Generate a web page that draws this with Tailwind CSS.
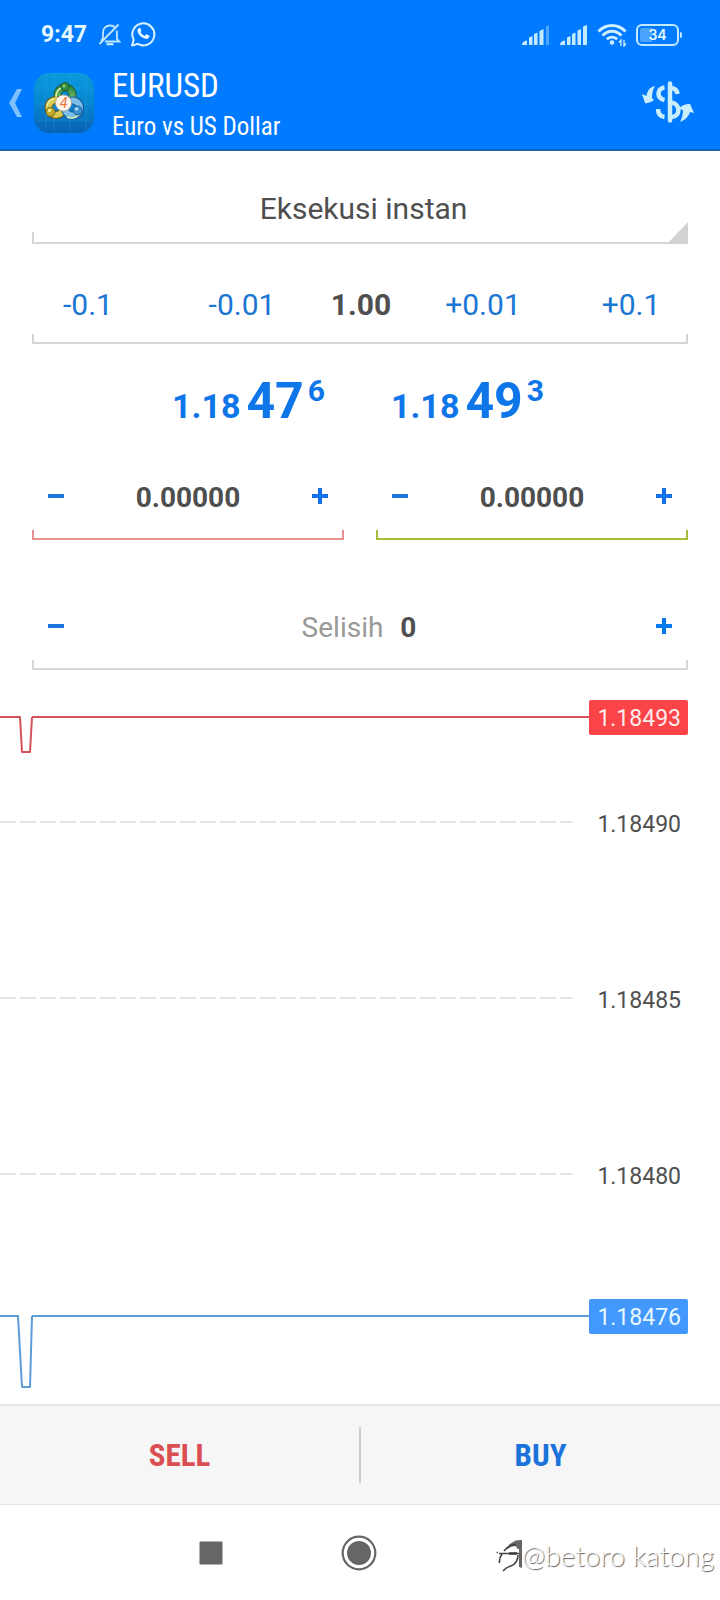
<!DOCTYPE html>
<html lang="id">
<head>
<meta charset="utf-8">
<meta name="viewport" content="width=device-width, initial-scale=1">
<title>EURUSD</title>
<script src="https://cdn.jsdelivr.net/npm/@tailwindcss/browser@4"></script>
</head>
<body class="relative min-h-screen bg-white font-[Roboto,sans-serif] text-[#4f4f4f]">
<header class="border-b-2 border-[#1b63b4] bg-[#007aff] text-[#e6f8ff]">
  <div class="flex h-[66px] items-center pt-1 pr-[38px] pl-[41px]">
    <span class="text-[23px] font-bold">9:47</span>
    <svg class="ml-[11px] h-6 w-6" viewBox="0 0 24 24" fill="none" stroke="#bfe6ff" stroke-width="1.8" aria-hidden="true">
      <path d="M5 15.500V9.500C5 5 8 2.500 12 2.500c2 0 3.800.7 5 2M18.500 7.500c.3 1 .4 2 .4 3v5.300l2.500 2.700H7M5 15.500l-2 2.300M1.500 21 20.500 1.500"/><path d="M8.500 21.200h7" stroke-width="2.200"/>
    </svg>
    <svg class="mb-[3px] ml-2 h-[26px] w-[26px]" viewBox="0 0 26 26" aria-hidden="true">
      <path d="M2 24.500 3.700 18.700A11 11 0 1 1 7.800 22.900Z" fill="none" stroke="#d9f4ff" stroke-width="2" stroke-linejoin="round"/>
      <path d="M8.800 7.200c.5-.5 1.300-.6 1.600.1l.9 2.100c.2.500-.2 1-.8 1.700.9 1.800 2.300 3.100 4.200 3.900l1.300-1.500c.3-.3.6-.3 1-.1l2 1c.7.400.5 1 .3 1.600-.6 1.500-2.300 2.100-3.700 1.800-4-.8-7-3.700-8-7-.4-1.500.2-2.800 1.200-3.600Z" fill="#e6f8ff"/>
    </svg>
    <div class="ml-auto flex items-center">
      <svg class="h-5 w-7" viewBox="0 0 28 20" fill="#c4eaff" aria-hidden="true"><path d="M1 20q0-4 5-4.500V20ZM8 12.500l3.500-1.500v9H8ZM13 9l3.500-1.500V20H13ZM18.500 6 22.500 4v16h-4Z"/><path d="M25 1.500 28 0v20h-3Z" opacity=".4"/></svg>
      <svg class="ml-2.5 h-5 w-7" viewBox="0 0 28 20" fill="#c4eaff" aria-hidden="true"><path d="M1 20q0-4 5-4.500V20ZM8 12.500l3.500-1.500v9H8ZM13 9l3.500-1.500V20H13ZM18.500 5.500 22 4v16h-3.500ZM24 1.500 28 0v20H24Z"/></svg>
      <svg class="ml-2.5 h-6 w-[30px]" viewBox="0 0 30 24" fill="none" stroke="#cfefff" stroke-width="2.800" aria-hidden="true">
        <path d="M1.500 8.500c7.500-8 19.500-8 27 0M5.500 12.500c5.500-5.700 13.500-5.700 19 0M9.800 16.300c3-3 7.400-3 10.400 0"/><circle cx="15" cy="19.500" r="1.300" stroke-width="2"/>
        <path d="M24 23v-6l-2 2.500M27 17v6l2-2.500" stroke-width="1.300"/>
      </svg>
      <div class="ml-[9px] flex items-center gap-px">
        <div class="flex h-[22px] w-[43px] items-center justify-center rounded-md border-2 border-[#c4eaff] bg-linear-to-r from-[#4aa3ff] from-35% to-transparent to-35% bg-clip-content p-[2px] font-[Inter,sans-serif] text-[14px] leading-none font-semibold">34</div>
        <div class="h-1.5 w-[2px] rounded-r bg-[#c4eaff]"></div>
      </div>
    </div>
  </div>
  <div class="flex h-[83px] items-start pr-[25px] pl-2">
    <button type="button" aria-label="Kembali" class="mt-[22px]"><svg class="h-[30px] w-4" viewBox="0 0 16 30"><path d="M14 1H9L1 15l8 14h5L7 15Z" fill="#7fc0ff"/></svg></button>
    <svg class="mt-[7px] ml-2.5 h-[60px] w-[60px]" viewBox="0 0 60 60" aria-hidden="true">
      <defs>
        <linearGradient id="tile" x1="0" y1="0" x2="0" y2="1"><stop offset="0" stop-color="#0a9add"/><stop offset=".5" stop-color="#0787d0"/><stop offset="1" stop-color="#0861b5"/></linearGradient>
        <linearGradient id="green" x1="0" y1="0" x2="0" y2="1"><stop offset="0" stop-color="#2f8c45"/><stop offset="1" stop-color="#8cc968"/></linearGradient>
      </defs>
      <rect width="60" height="60" rx="15" fill="url(#tile)"/>
      <path d="M12 2v56M20 0v60M36 0v60M52 3v54M2 15h56M0 31h60M2 47h56" stroke="#5dc2ee" stroke-width=".7" opacity=".25"/>
      <g fill="none" stroke-width="6">
        <circle cx="31" cy="22" r="7.500" stroke="#1f5d3b" stroke-width="8"/><circle cx="31" cy="22" r="7.500" stroke="url(#green)"/>
        <circle cx="22" cy="34.500" r="7.500" stroke="#695c20" stroke-width="8"/><circle cx="22" cy="34.500" r="7.500" stroke="#d9c94e"/>
        <circle cx="38.500" cy="35" r="7.500" stroke="#175b94" stroke-width="8"/><circle cx="38.500" cy="35" r="7.500" stroke="#7dbdea"/>
      </g>
      <path d="M22 24a10 10 0 0 1 5-9M13 33a9 9 0 0 1 7-7M33 44a9 9 0 0 0 11-2" fill="none" stroke="#dff1b0" stroke-width="1.500"/>
      <circle cx="31" cy="13.500" r="4" fill="#348c3c" stroke="#1c5c36"/><circle cx="16.500" cy="39" r="4.500" fill="#c0aa2d" stroke="#6e641d"/><circle cx="43.500" cy="37.500" r="4.500" fill="#3a90cf" stroke="#1b5f98"/>
      <circle cx="30" cy="13" r="1.500" fill="#8fd37c"/><circle cx="15.500" cy="37.500" r="1.800" fill="#f3e98c"/><circle cx="42.500" cy="36" r="1.800" fill="#a9dcfa"/>
      <circle cx="29.500" cy="30" r="8" fill="#fff7ee" stroke="#a9a08b" stroke-width=".8"/>
      <text x="29.500" y="35" text-anchor="middle" font-family="Roboto, sans-serif" font-size="14" font-style="italic" fill="#e5763c">4</text>
    </svg>
    <div class="ml-[18px] font-['Roboto_Condensed','Liberation_Sans_Narrow',sans-serif] text-white">
      <h1 class="text-[33px] leading-10">EURUSD</h1>
      <p class="mt-[5px] text-[25px] leading-8">Euro vs US Dollar</p>
    </div>
    <button type="button" aria-label="Ganti simbol" class="mt-[15px] ml-auto"><svg class="h-[42px] w-[54px]" viewBox="0 0 54 42">
      <g fill="none" stroke="#cbeeff" stroke-width="4.500"><path d="M29 2.500v37" stroke-linecap="round"/><path d="M23.500 6.500c-8 1-8 10.500 0 12.500M17 28c0 5 3 7.500 6.500 8M31 7c3 .5 5 2.500 5.500 6M31 21.500c9 2 8 14 0 14.500"/></g>
      <path d="M14 5C9 6 6 10 5.500 15L1 13l3 9q4 1 9-3l-2-2q0-7 3-12ZM39 41c2-4 3-8 3-12l-4-1q3-5 11-5l4 9-4-1q-2 7-10 10Z" fill="#cbeeff"/>
    </svg></button>
  </div>
</header>

<main>
  <div class="relative mx-8 mt-[33px]">
    <select aria-label="Jenis eksekusi" class="block h-12 w-full appearance-none bg-transparent pl-[7px] text-center text-[30px] [text-align-last:center]"><option>Eksekusi instan</option></select>
    <div class="h-3 border-b-2 border-l-2 border-[#d6d6d6]"></div>
    <div class="absolute right-0 bottom-0 h-[22px] w-[21px] bg-[#d3d3d3] [clip-path:polygon(100%_0,100%_100%,0_100%)]"></div>
  </div>

  <div class="mt-[30px] grid h-[60px] grid-cols-[176fr_132fr_106fr_138fr_158fr] items-center pr-2.5 text-center text-[30px] text-[#1a76d2]">
    <button type="button">-0.1</button>
    <button type="button">-0.01</button>
    <input aria-label="Volume" value="1.00" class="w-full min-w-0 text-center font-bold text-[#4f4f4f]">
    <button type="button">+0.01</button>
    <button type="button">+0.1</button>
  </div>
  <div class="mx-8 h-2.5 border-x-2 border-b-2 border-[#d6d6d6]"></div>

  <div class="mt-8 flex h-[50px] justify-center gap-[66px] pr-1 font-bold text-[#0f76ea]">
    <p class="flex items-baseline"><span class="text-[34px] leading-none">1.18</span><span class="ml-1.5 text-[50px] leading-none">47</span><sup class="top-0 ml-1 self-start text-[30px] leading-none">6</sup></p>
    <p class="flex items-baseline"><span class="text-[34px] leading-none">1.18</span><span class="ml-1.5 text-[50px] leading-none">49</span><sup class="top-0 ml-1 self-start text-[30px] leading-none">3</sup></p>
  </div>

  <div class="mx-8 mt-9 grid grid-cols-2 gap-8">
    <div>
      <div class="flex h-[68px] items-center px-4">
        <button type="button" aria-label="Kurangi Stop Loss"><svg class="h-4 w-4" viewBox="0 0 16 16"><path d="M0 6h16v4H0Z" fill="#1a74dc"/></svg></button>
        <input aria-label="Stop Loss" value="0.00000" class="w-full min-w-0 flex-1 pt-1 text-center text-[28px] font-bold">
        <button type="button" aria-label="Tambah Stop Loss"><svg class="h-4 w-4" viewBox="0 0 16 16"><path d="M0 6h6V0h4v6h6v4h-6v6H6v-6H0Z" fill="#1074e8"/></svg></button>
      </div>
      <div class="h-2.5 border-x-2 border-b-2 border-[#e88f92]"></div>
    </div>
    <div>
      <div class="flex h-[68px] items-center px-4">
        <button type="button" aria-label="Kurangi Take Profit"><svg class="h-4 w-4" viewBox="0 0 16 16"><path d="M0 6h16v4H0Z" fill="#1a74dc"/></svg></button>
        <input aria-label="Take Profit" value="0.00000" class="w-full min-w-0 flex-1 pt-1 text-center text-[28px] font-bold">
        <button type="button" aria-label="Tambah Take Profit"><svg class="h-4 w-4" viewBox="0 0 16 16"><path d="M0 6h6V0h4v6h6v4h-6v6H6v-6H0Z" fill="#1074e8"/></svg></button>
      </div>
      <div class="h-2.5 border-x-2 border-b-2 border-[#a2bf36]"></div>
    </div>
  </div>

  <div class="mx-8 mt-[52px]">
    <div class="flex h-[68px] items-center justify-between px-4">
      <button type="button" aria-label="Kurangi selisih"><svg class="h-4 w-4" viewBox="0 0 16 16"><path d="M0 6h16v4H0Z" fill="#1a74dc"/></svg></button>
      <div class="flex items-center gap-[15px] pt-1 text-[28px]"><label for="dev" class="text-[#999]">Selisih</label><input id="dev" value="0" class="w-5 text-center font-bold"></div>
      <button type="button" aria-label="Tambah selisih"><svg class="h-4 w-4" viewBox="0 0 16 16"><path d="M0 6h6V0h4v6h6v4h-6v6H6v-6H0Z" fill="#0579f2"/></svg></button>
    </div>
    <div class="h-2.5 border-x-2 border-b-2 border-[#d6d6d6]"></div>
  </div>

  <section aria-label="Grafik tick" class="grid h-[734px]">
    <svg class="col-start-1 row-start-1 h-full w-full" fill="none" stroke-width="2">
      <g stroke="#e4e4e4" stroke-dasharray="16 4"><line x1="0" x2="79.500%" y1="152" y2="152"/><line x1="0" x2="79.500%" y1="328" y2="328"/><line x1="0" x2="79.500%" y1="504" y2="504"/></g>
      <g stroke="#d45259"><path d="M0 47h20l2 35h8l2-35" stroke-linejoin="round"/><line x1="32" x2="83%" y1="47" y2="47"/></g>
      <g stroke="#5b9bd8"><path d="M0 646h18l4 71h8l2-71" stroke-linejoin="round"/><line x1="32" x2="83%" y1="646" y2="646"/></g>
    </svg>
    <div class="col-start-1 row-start-1 mr-8 flex flex-col items-end pt-[30px] text-[23px] leading-[33px]">
      <span class="rounded-xs bg-[#fb4448] pt-[2px] pr-[7px] pl-2 text-[#ffeaea]">1.18493</span>
      <span class="mt-[71px] pt-[2px] pr-[7px] pl-2">1.18490</span>
      <span class="mt-[141px] pt-[2px] pr-[7px] pl-2">1.18485</span>
      <span class="mt-[141px] pt-[2px] pr-[7px] pl-2">1.18480</span>
      <span class="mt-[106px] rounded-xs bg-[#4398fd] pt-[2px] pr-[7px] pl-2 text-[#e6f8ff]">1.18476</span>
    </div>
  </section>
</main>

<footer>
  <div class="flex h-[101px] items-center border-t-2 border-b border-t-[#e4e4e4] border-b-[#e4e4e4] bg-[#f6f6f6] font-['Roboto_Condensed','Liberation_Sans_Narrow',sans-serif] text-[31px] font-bold">
    <button type="button" class="h-full flex-1 pt-[2px] text-[#d94f54]">SELL</button>
    <div class="h-14 w-[2px] bg-[#cfcfcf]"></div>
    <button type="button" class="h-full flex-1 pt-[2px] text-[#1a72da]">BUY</button>
  </div>
  <nav class="flex h-[95px] items-center justify-center gap-[118px] pr-0.5" aria-label="Navigasi sistem">
    <button type="button" aria-label="Aplikasi terbaru"><svg class="h-6 w-6" viewBox="0 0 24 24"><rect x=".5" y=".5" width="23" height="23" rx="1" fill="#666"/></svg></button>
    <button type="button" aria-label="Beranda"><svg class="h-9 w-9" viewBox="0 0 36 36"><circle cx="18" cy="18" r="16.300" fill="none" stroke="#666" stroke-width="2.200"/><circle cx="18" cy="18" r="12" fill="#666"/></svg></button>
    <button type="button" aria-label="Kembali"><svg class="h-[27px] w-6" viewBox="0 0 24 27"><path d="M22 1v25L1 13.500Z" fill="#666"/></svg></button>
  </nav>
</footer>

<div class="absolute right-[6px] bottom-[27px] flex items-center">
  <svg class="h-9 w-6" viewBox="0 0 24 36" fill="none" aria-hidden="true">
    <path d="M0 2h11v30H0ZM11 27q6-3 8-7l5-1v15H11Z" fill="#fff"/>
    <path d="M8 12Q15 2 24 3v28l-3-1V12Z" fill="#666"/>
    <path d="M7 15q4-6 10-6 3 1 3 6H7ZM5 18h15q-1 6-7 9-7 2-8-9Z" fill="#fff"/>
    <path d="M6 14Q11 7 18 8M1 16.500h20M4 17q-3 4-2.500 9M20 18q0 8-7 11-5 1-8 5" stroke="#444" stroke-width="1.600"/>
  </svg>
  <span class="font-[Lato,sans-serif] text-[28px] leading-9 font-light text-white [text-shadow:1px_1px_1px_#555]">@betoro katong</span>
</div>
</body>
</html>
